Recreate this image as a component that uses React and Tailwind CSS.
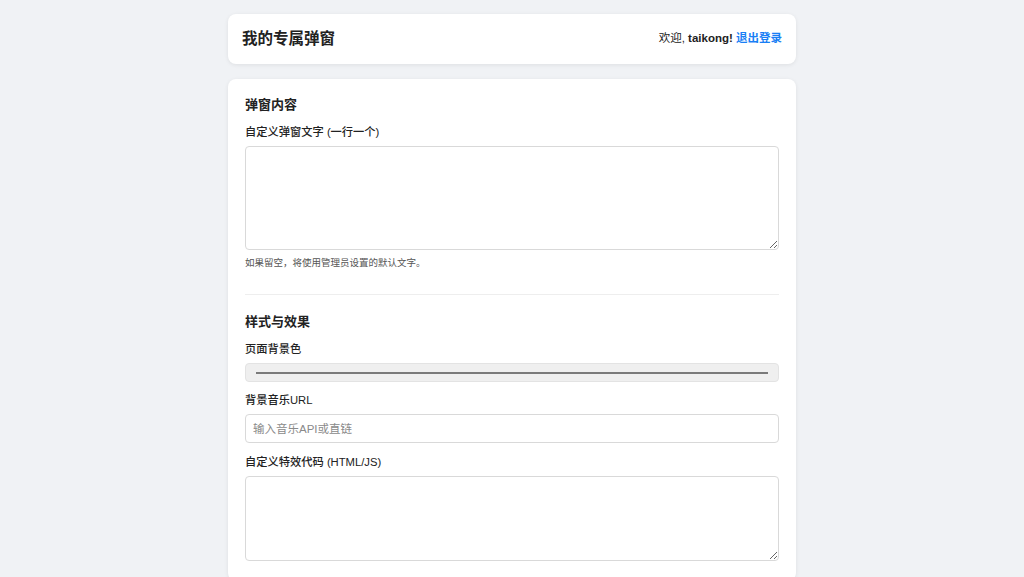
export default function App() {
  const font = { fontFamily: '"Liberation Sans", "Noto Sans CJK SC", sans-serif' };
  return (
    <div className="min-h-[577px] bg-[#f0f2f5] text-[#222]" style={font}>
      <div className="mx-auto w-[568px] pt-[14px]">
        <header className="flex h-[50px] items-center justify-between rounded-[8px] bg-white px-[14px] shadow-[0_1px_4px_rgba(0,0,0,0.08)]">
          <h1 className="text-[15.5px] font-bold leading-none">我的专属弹窗</h1>
          <div className="text-[11.5px] leading-none">
            欢迎, <b>taikong!</b> <a className="font-bold text-[#1a7ff5]">退出登录</a>
          </div>
        </header>

        <main className="mt-[15px] rounded-[8px] bg-white px-[17px] pb-[20px] pt-[17px] shadow-[0_1px_4px_rgba(0,0,0,0.08)]">
          <h2 className="text-[13px] font-bold leading-[18px]">弹窗内容</h2>
          <div className="mt-[10px]">
            <label className="block text-[11.25px] font-medium leading-[16px]">自定义弹窗文字 (一行一个)</label>
            <textarea className="mt-[6px] block h-[104px] w-full rounded-[4px] border border-[#d9d9d9] bg-white p-2 text-[12px] outline-none" />
            <p className="mt-[6px] text-[9.5px] leading-[14px] text-[#555]">如果留空，将使用管理员设置的默认文字。</p>
          </div>

          <div className="mt-[24px] border-t border-[#eeeeee]" />

          <h2 className="mt-[18px] text-[13px] font-bold leading-[18px]">样式与效果</h2>

          <div className="mt-[10px]">
            <label className="block text-[11.25px] font-medium leading-[16px]">页面背景色</label>
            <div className="mt-[6px] flex h-[19px] w-full items-center rounded-[4px] border border-[#e3e3e3] bg-[#efefef] px-[10px]">
              <div className="h-[2px] w-full bg-[#7a7a7a]" />
            </div>
          </div>

          <div className="mt-[10px]">
            <label className="block text-[11.25px] font-medium leading-[16px]">背景音乐URL</label>
            <input
              className="mt-[6px] block h-[29px] w-full rounded-[4px] border border-[#d9d9d9] bg-white px-[7px] text-[11.5px] outline-none placeholder:text-[#8a8a8a]"
              placeholder="输入音乐API或直链"
            />
          </div>

          <div className="mt-[11px]">
            <label className="block text-[11.25px] font-medium leading-[16px]">自定义特效代码 (HTML/JS)</label>
            <textarea className="mt-[6px] block h-[85px] w-full rounded-[4px] border border-[#d9d9d9] bg-white p-2 text-[12px] outline-none" />
          </div>
        </main>
      </div>
    </div>
  );
}
